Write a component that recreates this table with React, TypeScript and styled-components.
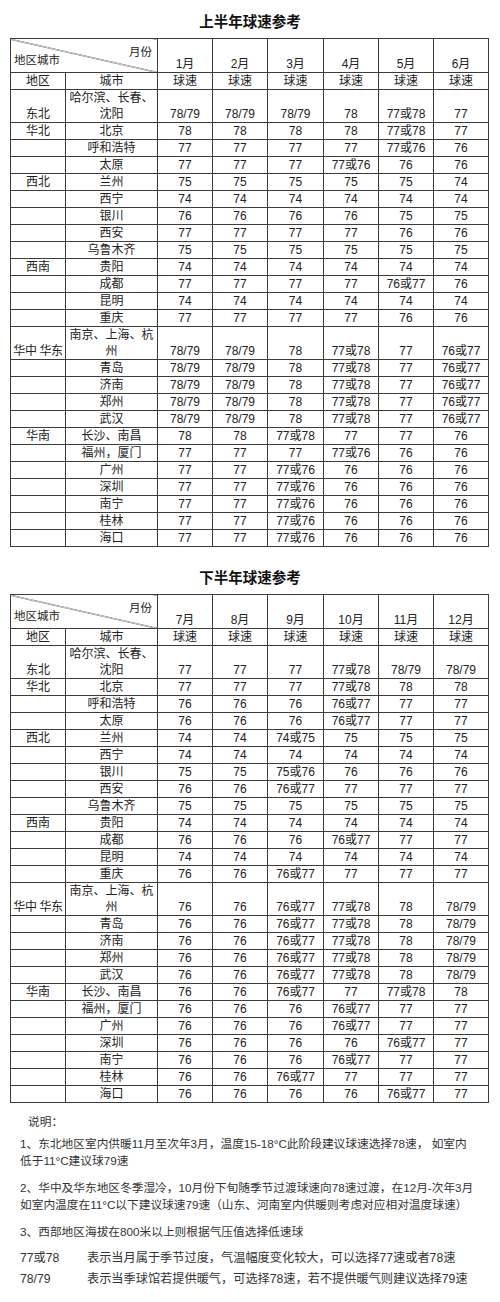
import * as React from "react";
import styled, { createGlobalStyle } from "styled-components";

type Row = { region: string; city: string; speeds: string[] };

const firstHalf: Row[] = [
  { region: "东北", city: "哈尔滨、长春、\n沈阳", speeds: ["78/79", "78/79", "78/79", "78", "77或78", "77"] },
  { region: "华北", city: "北京", speeds: ["78", "78", "78", "78", "77或78", "77"] },
  { region: "", city: "呼和浩特", speeds: ["77", "77", "77", "77", "77或76", "76"] },
  { region: "", city: "太原", speeds: ["77", "77", "77", "77或76", "76", "76"] },
  { region: "西北", city: "兰州", speeds: ["75", "75", "75", "75", "75", "74"] },
  { region: "", city: "西宁", speeds: ["74", "74", "74", "74", "74", "74"] },
  { region: "", city: "银川", speeds: ["76", "76", "76", "76", "75", "75"] },
  { region: "", city: "西安", speeds: ["77", "77", "77", "77", "76", "76"] },
  { region: "", city: "乌鲁木齐", speeds: ["75", "75", "75", "75", "75", "75"] },
  { region: "西南", city: "贵阳", speeds: ["74", "74", "74", "74", "74", "74"] },
  { region: "", city: "成都", speeds: ["77", "77", "77", "77", "76或77", "76"] },
  { region: "", city: "昆明", speeds: ["74", "74", "74", "74", "74", "74"] },
  { region: "", city: "重庆", speeds: ["77", "77", "77", "77", "76", "76"] },
  { region: "华中 华东", city: "南京、上海、杭\n州", speeds: ["78/79", "78/79", "78", "77或78", "77", "76或77"] },
  { region: "", city: "青岛", speeds: ["78/79", "78/79", "78", "77或78", "77", "76或77"] },
  { region: "", city: "济南", speeds: ["78/79", "78/79", "78", "77或78", "77", "76或77"] },
  { region: "", city: "郑州", speeds: ["78/79", "78/79", "78", "77或78", "77", "76或77"] },
  { region: "", city: "武汉", speeds: ["78/79", "78/79", "78", "77或78", "77", "76或77"] },
  { region: "华南", city: "长沙、南昌", speeds: ["78", "78", "77或78", "77", "77", "76"] },
  { region: "", city: "福州，厦门", speeds: ["77", "77", "77", "77或76", "76", "76"] },
  { region: "", city: "广州", speeds: ["77", "77", "77或76", "76", "76", "76"] },
  { region: "", city: "深圳", speeds: ["77", "77", "77或76", "76", "76", "76"] },
  { region: "", city: "南宁", speeds: ["77", "77", "77或76", "76", "76", "76"] },
  { region: "", city: "桂林", speeds: ["77", "77", "77或76", "76", "76", "76"] },
  { region: "", city: "海口", speeds: ["77", "77", "77或76", "76", "76", "76"] },
];

const secondHalf: Row[] = [
  { region: "东北", city: "哈尔滨、长春、\n沈阳", speeds: ["77", "77", "77", "77或78", "78/79", "78/79"] },
  { region: "华北", city: "北京", speeds: ["77", "77", "77", "77或78", "78", "78"] },
  { region: "", city: "呼和浩特", speeds: ["76", "76", "76", "76或77", "77", "77"] },
  { region: "", city: "太原", speeds: ["76", "76", "76", "76或77", "77", "77"] },
  { region: "西北", city: "兰州", speeds: ["74", "74", "74或75", "75", "75", "75"] },
  { region: "", city: "西宁", speeds: ["74", "74", "74", "74", "74", "74"] },
  { region: "", city: "银川", speeds: ["75", "75", "75或76", "76", "76", "76"] },
  { region: "", city: "西安", speeds: ["76", "76", "76或77", "77", "77", "77"] },
  { region: "", city: "乌鲁木齐", speeds: ["75", "75", "75", "75", "75", "75"] },
  { region: "西南", city: "贵阳", speeds: ["74", "74", "74", "74", "74", "74"] },
  { region: "", city: "成都", speeds: ["76", "76", "76", "76或77", "77", "77"] },
  { region: "", city: "昆明", speeds: ["74", "74", "74", "74", "74", "74"] },
  { region: "", city: "重庆", speeds: ["76", "76", "76或77", "77", "77", "77"] },
  { region: "华中 华东", city: "南京、上海、杭\n州", speeds: ["76", "76", "76或77", "77或78", "78", "78/79"] },
  { region: "", city: "青岛", speeds: ["76", "76", "76或77", "77或78", "78", "78/79"] },
  { region: "", city: "济南", speeds: ["76", "76", "76或77", "77或78", "78", "78/79"] },
  { region: "", city: "郑州", speeds: ["76", "76", "76或77", "77或78", "78", "78/79"] },
  { region: "", city: "武汉", speeds: ["76", "76", "76或77", "77或78", "78", "78/79"] },
  { region: "华南", city: "长沙、南昌", speeds: ["76", "76", "76或77", "77", "77或78", "78"] },
  { region: "", city: "福州，厦门", speeds: ["76", "76", "76", "76或77", "77", "77"] },
  { region: "", city: "广州", speeds: ["76", "76", "76", "76或77", "77", "77"] },
  { region: "", city: "深圳", speeds: ["76", "76", "76", "76", "76或77", "77"] },
  { region: "", city: "南宁", speeds: ["76", "76", "76", "76或77", "77", "77"] },
  { region: "", city: "桂林", speeds: ["76", "76", "76或77", "77", "77", "77"] },
  { region: "", city: "海口", speeds: ["76", "76", "76", "76", "76或77", "77"] },
];

const colWidths = [55, 92, 55, 55, 56, 55, 55, 55];

// one table cell; the inner box has a fixed height so mixed fonts don't grow the row
function C({ text, narrow }: { text: string; narrow?: boolean }) {
  const lines = text.split("\n").length;
  return (
    <Cell $narrow={narrow}>
      <CellBox $lines={lines}>{text}</CellBox>
    </Cell>
  );
}

function SpeedTable({ title, months, rows, first }: { title: string; months: string[]; rows: Row[]; first?: boolean }) {
  return (
    <Section $first={first}>
      <Title>{title}</Title>
      <Sheet>
        <colgroup>
          {colWidths.map((w, i) => (
            <col key={i} style={{ width: w }} />
          ))}
        </colgroup>
        <tbody>
          <tr>
            <DiagCell colSpan={2}>
              <DiagBox>
                <span className="month">月份</span>
                <span className="area">地区城市</span>
              </DiagBox>
            </DiagCell>
            {months.map((m) => (
              <C key={m} text={m} />
            ))}
          </tr>
          <tr>
            <C text="地区" />
            <C text="城市" />
            {months.map((m) => (
              <C key={m} text="球速" />
            ))}
          </tr>
          {rows.map((r) => (
            <tr key={r.city}>
              <C text={r.region} narrow={r.region.length > 2} />
              <C text={r.city} />
              {r.speeds.map((s, i) => (
                <C key={i} text={s} />
              ))}
            </tr>
          ))}
        </tbody>
      </Sheet>
    </Section>
  );
}

export default function App() {
  return (
    <>
      <GlobalStyle />
      <Page>
        <SpeedTable first title="上半年球速参考" months={["1月", "2月", "3月", "4月", "5月", "6月"]} rows={firstHalf} />
        <SpeedTable title="下半年球速参考" months={["7月", "8月", "9月", "10月", "11月", "12月"]} rows={secondHalf} />
        <Notes>
          <NoteHead>说明：</NoteHead>
          <NotePara>
            <div>1、东北地区室内供暖11月至次年3月，温度15-18°C此阶段建议球速选择78速， 如室内</div>
            <div>低于11°C建议球79速</div>
          </NotePara>
          <NotePara>
            <div>2、华中及华东地区冬季湿冷，10月份下旬随季节过渡球速向78速过渡，在12月-次年3月</div>
            <div>如室内温度在11°C以下建议球速79速（山东、河南室内供暖则考虑对应相对温度球速）</div>
          </NotePara>
          <NotePara>
            <div>3、西部地区海拔在800米以上则根据气压值选择低速球</div>
          </NotePara>
          <Legend>
            <span>77或78</span>
            <span>表示当月属于季节过度，气温幅度变化较大，可以选择77速或者78速</span>
            <span>78/79</span>
            <span>表示当季球馆若提供暖气，可选择78速，若不提供暖气则建议选择79速</span>
          </Legend>
        </Notes>
      </Page>
    </>
  );
}

const GlobalStyle = createGlobalStyle`
  html, body {
    margin: 0;
    padding: 0;
    background: #fff;
  }
  body {
    font-family: "Liberation Sans", "Noto Sans CJK SC", sans-serif;
    color: #222;
  }
`;

const Page = styled.div`
  width: 500px;
  padding: 12px 0 0;
`;

const Section = styled.section<{ $first?: boolean }>`
  margin-top: ${(p) => (p.$first ? "0" : "21px")};
`;

const Title = styled.h2`
  margin: 0 0 6px;
  height: 20px;
  text-align: center;
  font-size: 14.5px;
  line-height: 20px;
  font-weight: bold;
  color: #111;
`;

const Sheet = styled.table`
  margin-left: 10px;
  width: 479px;
  border-collapse: collapse;
  table-layout: fixed;
`;

const Cell = styled.td<{ $narrow?: boolean }>`
  border: 1px solid #3c3c3c;
  padding: 0;
  font-size: 12px;
  text-align: center;
  vertical-align: bottom;
  color: #222;
  letter-spacing: ${(p) => (p.$narrow ? "-0.4px" : "0")};
`;

const CellBox = styled.div<{ $lines: number }>`
  height: ${(p) => p.$lines * 16}px;
  line-height: 16px;
  white-space: pre-line;
  display: flex;
  flex-direction: column;
  justify-content: flex-end;
  overflow: visible;
`;

const DiagCell = styled.td`
  border: 1px solid #3c3c3c;
  padding: 0;
  background: linear-gradient(
    to top right,
    transparent calc(50% - 0.7px),
    #3c3c3c 50%,
    transparent calc(50% + 0.7px)
  );
`;

const DiagBox = styled.div`
  display: grid;
  height: 33px;
  font-size: 11.5px;
  line-height: 14px;
  color: #222;

  span {
    grid-area: 1 / 1;
  }
  .month {
    justify-self: end;
    align-self: start;
    margin: 6px 5px 0 0;
  }
  .area {
    justify-self: start;
    align-self: end;
    margin: 0 0 5px 3px;
  }
`;

const Notes = styled.div`
  margin: 10px 0 0 20px;
  color: #333;
  font-size: 11.7px;
  line-height: 17px;
  white-space: nowrap;
`;

const NoteHead = styled.div`
  padding-left: 8px;
  margin-bottom: 5px;
`;

const NotePara = styled.div`
  margin-bottom: 10px;
`;

const Legend = styled.div`
  display: grid;
  grid-template-columns: 67px auto;
  font-size: 12.2px;
  line-height: 21px;
  margin-top: -2px;
`;
